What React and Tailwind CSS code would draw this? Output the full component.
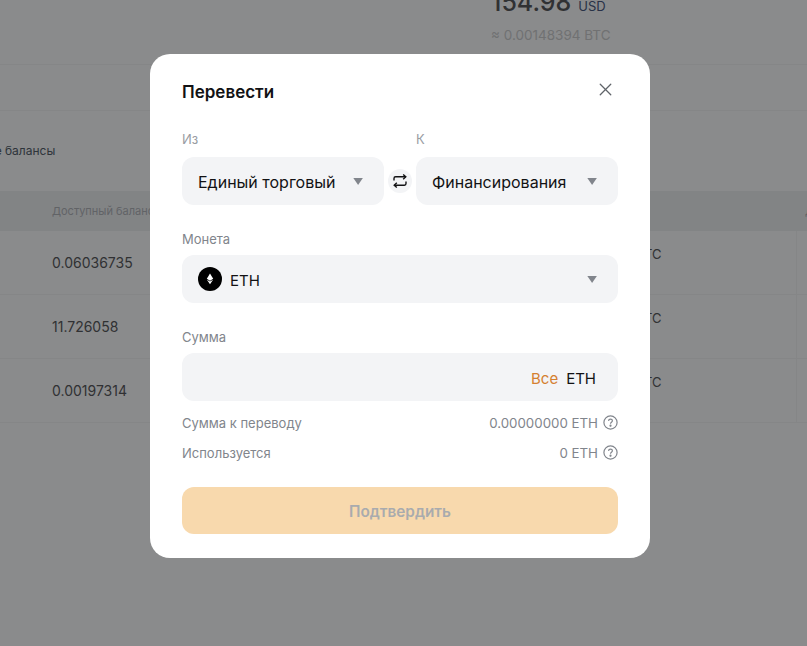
import { X } from "lucide-react";

const Caret = () => (
  <svg width="12" height="9" viewBox="0 0 12 9" className="shrink-0">
    <path d="M1.3 1h9.6L6.1 8z" fill="#81858c" />
  </svg>
);

const Swap = () => (
  <svg width="16" height="16" viewBox="0 0 16 16" fill="none" stroke="#121214" strokeWidth="1.4">
    <path d="M2 7.6V5.4c0-.9.7-1.6 1.6-1.6h10" />
    <path d="M11.2 1.4l2.6 2.4-2.6 2.4" />
    <path d="M14 8.4v2.2c0 .9-.7 1.6-1.6 1.6h-10" />
    <path d="M4.8 14.6l-2.6-2.4 2.6-2.4" />
  </svg>
);

const EthIcon = () => (
  <svg width="24" height="24" viewBox="0 0 24 24">
    <circle cx="12" cy="12" r="12" fill="#000" />
    <path d="M12 6.6l-3.2 5.2 3.2 1.9 3.2-1.9z" fill="#fff" />
    <path d="M8.9 12.7l3.1 4.6 3.1-4.6-3.1 1.8z" fill="#fff" />
  </svg>
);

const Help = () => (
  <svg width="15" height="15" viewBox="0 0 15 15" fill="none" stroke="#81858c" strokeWidth="1.2">
    <circle cx="7.5" cy="7.5" r="6.6" />
    <path d="M5.6 5.9c0-1.1.9-1.8 1.9-1.8s1.9.7 1.9 1.7c0 1.4-1.9 1.5-1.9 2.9" />
    <circle cx="7.5" cy="10.7" r=".5" fill="#81858c" />
  </svg>
);

const Select = ({ children, className }) => (
  <div className={`flex h-12 items-center justify-between rounded-xl bg-[#f3f4f6] pl-4 pr-5 ${className}`}>
    {children}
  </div>
);

const rows = [
  { amount: "0.06036735" },
  { amount: "11.726058" },
  { amount: "0.00197314" },
];

export default function App() {
  return (
    <div className="relative h-[646px] w-full overflow-hidden bg-white font-['Inter',sans-serif]">
      {/* page behind the dialog */}
      <div className="flex h-[65px] flex-col border-b border-[#f5f5f5] pl-[491px]">
        <div className="-mt-[14px] flex items-baseline gap-[7px] text-[#5a5a5c]">
          <span className="text-[25px] font-medium leading-[32px]">154.98</span>
          <span className="text-[13px] text-[#4a5a80]">USD</span>
        </div>
        <p className="mt-[7px] text-[13.5px] text-[#cfcfd0]">≈ 0.00148394 BTC</p>
      </div>
      <div className="h-[46px] border-b border-[#f5f5f5]" />
      <div className="flex h-[80px] items-center">
        <span className="-ml-[19px] text-[12px] text-[#55606a]">все балансы</span>
      </div>
      <div className="relative flex h-[40px] items-center bg-[#f1f2f3] pl-[52px] text-[11px] text-[#b4b6ba]">
        Доступный баланс
        <span className="absolute left-[805px] top-[12px]">Д</span>
      </div>
      {rows.map((row) => (
        <div key={row.amount} className="relative flex h-[64px] items-center border-b border-[#f5f5f5] pl-[52px] text-[14px] text-[#5a5a5c]">
          <span>{row.amount}</span>
          <span className="absolute left-[613px] top-[14px] text-[13px]">0.0 BTC</span>
          <span className="absolute bottom-0 left-[796px] top-0 w-px bg-[#f5f5f5]" />
        </div>
      ))}

      {/* backdrop */}
      <div className="absolute inset-0 bg-[#000204]/46" />

      {/* dialog */}
      <div className="absolute left-[150px] top-[54px] h-[504px] w-[500px] rounded-[20px] bg-white px-8 pt-6">
        <div className="flex h-[26px] items-center justify-between">
          <h2 className="pt-[3px] text-[17px] font-semibold text-[#121214]">Перевести</h2>
          <X size={21} strokeWidth={1.5} color="#5f6369" className="mr-[2px] -mt-[4px]" />
        </div>

        <div className="mt-[24px] flex items-end justify-between">
          <div>
            <p className="mb-[7px] text-[13px] leading-[22px] text-[#9a9da3]">Из</p>
            <Select className="w-[202px]">
              <span className="pt-[2px] text-[16px] text-[#121214]">Единый торговый</span>
              <Caret />
            </Select>
          </div>
          <div className="mb-3 flex h-6 w-6 items-center justify-center rounded-full bg-[#f3f4f6]">
            <Swap />
          </div>
          <div>
            <p className="mb-[7px] text-[13px] leading-[22px] text-[#9a9da3]">К</p>
            <Select className="w-[202px]">
              <span className="pt-[2px] text-[16px] text-[#121214]">Финансирования</span>
              <Caret />
            </Select>
          </div>
        </div>

        <p className="mb-[5px] mt-[23px] text-[13px] leading-[22px] text-[#81858c]">Монета</p>
        <Select>
          <div className="flex items-center gap-2">
            <EthIcon />
            <span className="pt-[4px] text-[15px] text-[#121214]">ETH</span>
          </div>
          <Caret />
        </Select>

        <p className="mb-[5px] mt-[23px] text-[13px] leading-[22px] text-[#81858c]">Сумма</p>
        <div className="flex h-12 items-center justify-end gap-2 rounded-xl bg-[#f3f4f6] pr-[22px] text-[15px]">
          <span className="pt-[4px] text-[#d58030]">Все</span>
          <span className="pt-[4px] text-[#121214]">ETH</span>
        </div>

        <div className="mt-[10px] flex h-[22px] items-center justify-between text-[13px] text-[#81858c]">
          <span className="pt-[4px]">Сумма к переводу</span>
          <span className="flex items-center gap-[5px] text-[13.3px]"><span className="pt-[4px]">0.00000000 ETH</span> <Help /></span>
        </div>
        <div className="mt-2 flex h-[22px] items-center justify-between text-[13px] text-[#81858c]">
          <span className="pt-[4px]">Используется</span>
          <span className="flex items-center gap-[5px] text-[13.3px]"><span className="pt-[4px]">0 ETH</span> <Help /></span>
        </div>

        <button className="mt-[24px] h-[47px] w-full rounded-xl bg-[#f8d9ad] pt-[3px] text-[15.3px] font-semibold text-[#a9abae]">
          Подтвердить
        </button>
      </div>
    </div>
  );
}
